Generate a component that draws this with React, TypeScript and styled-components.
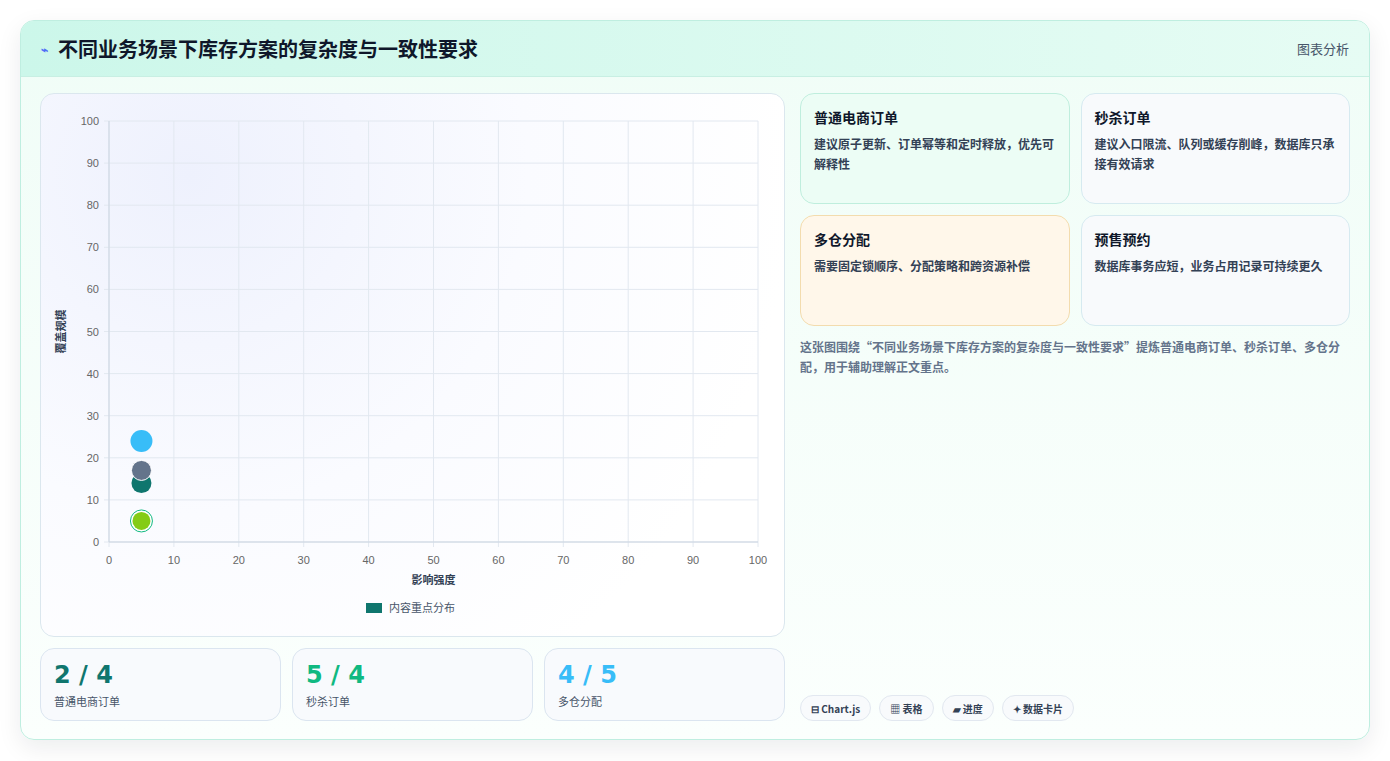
import styled, { createGlobalStyle } from 'styled-components';

const Global = createGlobalStyle`
  body { margin: 0; background: #fff; font-family: "Noto Sans CJK SC", "Noto Sans", sans-serif; }
`;

const Page = styled.div`
  padding: 20px 20px 21px 20px;
  height: 761px;
  box-sizing: border-box;
`;

const Card = styled.div`
  height: 720px;
  box-sizing: border-box;
  border: 1px solid #bfeee0;
  border-radius: 14px;
  background: linear-gradient(180deg, #f0fdf7 0%, #fbfffd 100%);
  box-shadow: 0 8px 24px rgba(15, 23, 42, 0.08);
  overflow: hidden;
  display: flex;
  flex-direction: column;
`;

const Header = styled.div`
  height: 55px;
  flex: none;
  display: flex;
  align-items: center;
  justify-content: space-between;
  padding: 0 20px;
  background: linear-gradient(90deg, #ccf7ea, #e6fcf4);
  border-bottom: 1px solid #c8efe3;
`;

const Title = styled.h1`
  margin: 0;
  font-size: 20px;
  font-weight: 700;
  color: #0f172a;
  display: flex;
  align-items: center;
  gap: 10px;
`;

const HeaderTag = styled.span`
  font-size: 13px;
  color: #475569;
`;

const Body = styled.div`
  flex: 1;
  display: grid;
  grid-template-columns: 745px 1fr;
  gap: 15px;
  padding: 16px 19px 18px 19px;
`;

const Left = styled.div`
  display: flex;
  flex-direction: column;
  gap: 11px;
`;

const ChartCard = styled.div`
  height: 544px;
  box-sizing: border-box;
  border: 1px solid #dbe7ee;
  border-radius: 14px;
  background: radial-gradient(circle at 20% 15%, #eef1fd 0%, #fafbff 45%, #fff 80%);
`;

const Stats = styled.div`
  display: grid;
  grid-template-columns: repeat(3, 1fr);
  gap: 11px;
`;

const Stat = styled.div`
  height: 73px;
  box-sizing: border-box;
  border: 1px solid #dbe5f0;
  border-radius: 14px;
  background: #f8fafd;
  padding: 12px 13px;
`;

const StatValue = styled.div<{ $c: string }>`
  font-family: "DejaVu Sans", sans-serif;
  font-weight: 800;
  font-size: 24px;
  line-height: 28px;
  color: ${p => p.$c};
`;

const StatLabel = styled.div`
  font-size: 11px;
  color: #475569;
  margin-top: 4px;
`;

const Right = styled.div`
  display: flex;
  flex-direction: column;
`;

const Grid = styled.div`
  display: grid;
  grid-template-columns: 1fr 1fr;
  gap: 11px;
`;

const Info = styled.div<{ $bg: string; $bd: string }>`
  height: 111px;
  box-sizing: border-box;
  border: 1px solid ${p => p.$bd};
  border-radius: 14px;
  background: ${p => p.$bg};
  padding: 13px 12px 13px 13px;
`;

const InfoTitle = styled.div`
  font-size: 14px;
  font-weight: 700;
  color: #0f172a;
  margin-bottom: 7px;
`;

const InfoText = styled.div`
  font-size: 12px;
  font-weight: 600;
  line-height: 20px;
  color: #334155;
`;

const Note = styled.p`
  margin: 11px 0 0;
  font-size: 12px;
  line-height: 20px;
  font-weight: 600;
  color: #64748b;
`;

const Tags = styled.div`
  margin-top: auto;
  display: flex;
  gap: 8px;
`;

const Tag = styled.span`
  height: 26px;
  box-sizing: border-box;
  padding: 0 10px;
  display: flex;
  align-items: center;
  border: 1px solid #e2e8f0;
  border-radius: 13px;
  background: #f8fafc;
  font-size: 10px;
  font-weight: 700;
  color: #334155;
`;

const X0 = 68, Y0 = 448, W = 649, H = 421;
const ticks = [0, 10, 20, 30, 40, 50, 60, 70, 80, 90, 100];
const px = (v: number) => X0 + (v / 100) * W;
const py = (v: number) => Y0 - (v / 100) * H;

const Chart = () => (
  <svg width="745" height="542" style={{ display: 'block' }}>
    {ticks.map(t => (
      <g key={t}>
        <line x1={px(t)} x2={px(t)} y1={py(100)} y2={Y0 + 5} stroke="#e2e8f0" />
        <line x1={X0 - 5} x2={px(100)} y1={py(t)} y2={py(t)} stroke="#e2e8f0" />
        <text x={px(t)} y={Y0 + 22} fontSize="11" fill="#666" textAnchor="middle" fontFamily="Liberation Sans">{t}</text>
        <text x={X0 - 10} y={py(t) + 4} fontSize="11" fill="#666" textAnchor="end" fontFamily="Liberation Sans">{t}</text>
      </g>
    ))}
    <line x1={X0} x2={px(100)} y1={Y0} y2={Y0} stroke="#cbd5e1" />
    <line x1={X0} x2={X0} y1={py(100)} y2={Y0} stroke="#cbd5e1" />
    <text x={px(50)} y={Y0 + 42} fontSize="11" fontWeight="700" fill="#334155" textAnchor="middle">影响强度</text>
    <text transform={`translate(24 ${py(50)}) rotate(-90)`} fontSize="11" fontWeight="700" fill="#334155" textAnchor="middle">覆盖规模</text>
    <circle cx={px(5)} cy={py(14)} r="10" fill="#0f766e" />
    <circle cx={px(5)} cy={py(17)} r="10" fill="#64748b" stroke="#fff" strokeWidth="1" />
    <circle cx={px(5)} cy={py(24)} r="11" fill="#38bdf8" />
    <circle cx={px(5)} cy={py(5)} r="11" fill="#fff" stroke="#10b981" strokeWidth="1" />
    <circle cx={px(5)} cy={py(5)} r="9" fill="#84cc16" />
    <rect x="325" y="509" width="16" height="10" fill="#0f766e" />
    <text x="348" y="518" fontSize="11" fill="#475569">内容重点分布</text>
  </svg>
);

export default function App() {
  return (
    <Page>
      <Global />
      <Card>
        <Header>
          <Title><span style={{ color: '#4f6ef7', fontSize: 12 }}>⌁</span>不同业务场景下库存方案的复杂度与一致性要求</Title>
          <HeaderTag>图表分析</HeaderTag>
        </Header>
        <Body>
          <Left>
            <ChartCard><Chart /></ChartCard>
            <Stats>
              <Stat><StatValue $c="#0f766e">2 / 4</StatValue><StatLabel>普通电商订单</StatLabel></Stat>
              <Stat><StatValue $c="#10b981">5 / 4</StatValue><StatLabel>秒杀订单</StatLabel></Stat>
              <Stat><StatValue $c="#38bdf8">4 / 5</StatValue><StatLabel>多仓分配</StatLabel></Stat>
            </Stats>
          </Left>
          <Right>
            <Grid>
              <Info $bg="#ecfdf5" $bd="#bfeedd"><InfoTitle>普通电商订单</InfoTitle><InfoText>建议原子更新、订单幂等和定时释放，优先可解释性</InfoText></Info>
              <Info $bg="#f8fafc" $bd="#d6eaf0"><InfoTitle>秒杀订单</InfoTitle><InfoText>建议入口限流、队列或缓存削峰，数据库只承接有效请求</InfoText></Info>
              <Info $bg="#fff7ea" $bd="#f3dcae"><InfoTitle>多仓分配</InfoTitle><InfoText>需要固定锁顺序、分配策略和跨资源补偿</InfoText></Info>
              <Info $bg="#f8fafc" $bd="#d6eaf0"><InfoTitle>预售预约</InfoTitle><InfoText>数据库事务应短，业务占用记录可持续更久</InfoText></Info>
            </Grid>
            <Note>这张图围绕“不同业务场景下库存方案的复杂度与一致性要求”提炼普通电商订单、秒杀订单、多仓分配，用于辅助理解正文重点。</Note>
            <Tags>
              <Tag>⊟ Chart.js</Tag>
              <Tag>▦ 表格</Tag>
              <Tag>▰ 进度</Tag>
              <Tag>✦ 数据卡片</Tag>
            </Tags>
          </Right>
        </Body>
      </Card>
    </Page>
  );
}
